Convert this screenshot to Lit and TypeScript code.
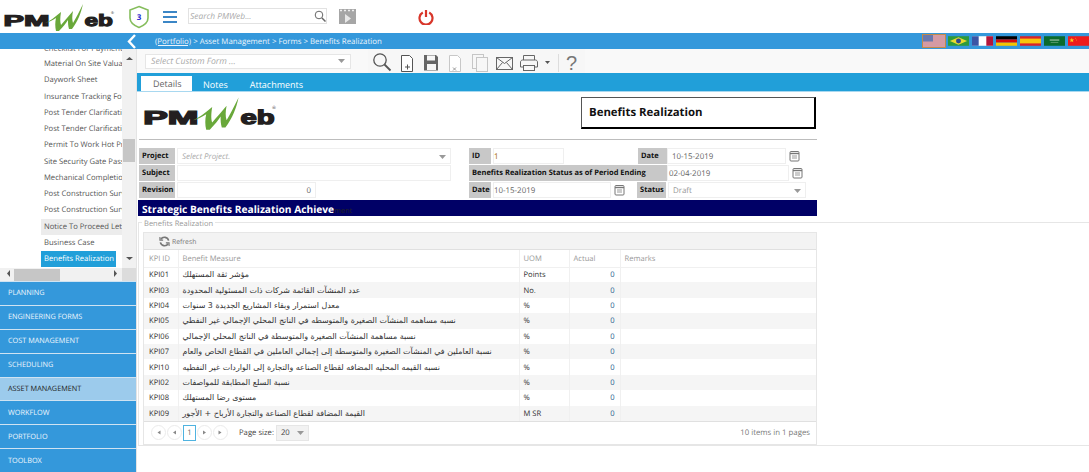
import { LitElement, html, css, svg } from 'lit';
import { customElement, property } from 'lit/decorators.js';
import { classMap } from 'lit/directives/class-map.js';

const TREE_ITEMS = [
  'Checklist For Payment',
  'Material On Site Valuation',
  'Daywork Sheet',
  'Insurance Tracking Form',
  'Post Tender Clarification',
  'Post Tender Clarification',
  'Permit To Work Hot Process',
  'Site Security Gate Pass',
  'Mechanical Completion',
  'Post Construction Survey',
  'Post Construction Survey',
  'Notice To Proceed Letter',
  'Business Case',
  'Benefits Realization',
];

const MODULES = [
  'PLANNING',
  'ENGINEERING FORMS',
  'COST MANAGEMENT',
  'SCHEDULING',
  'ASSET MANAGEMENT',
  'WORKFLOW',
  'PORTFOLIO',
  'TOOLBOX',
];

const KPIS = [
  ['KPI01', 'مؤشر ثقة المستهلك', 'Points'],
  ['KPI03', 'عدد المنشآت القائمة شركات ذات المسئولية المحدودة', 'No.'],
  ['KPI04', 'معدل استمرار وبقاء المشاريع الجديدة 3 سنوات', '%'],
  ['KPI05', 'نسبه مساهمه المنشآت الصغيرة والمتوسطه في الناتج المحلي الإجمالي غير النفطي', '%'],
  ['KPI06', 'نسبة مساهمة المنشآت الصغيرة والمتوسطة في الناتج المحلي الإجمالي', '%'],
  ['KPI07', 'نسبة العاملين في المنشآت الصغيرة والمتوسطة إلى إجمالي العاملين في القطاع الخاص والعام', '%'],
  ['KPI10', 'نسبه القيمه المحليه المضافه لقطاع الصناعه والتجارة إلى الواردات غير النفطيه', '%'],
  ['KPI02', 'نسبة السلع المطابقة للمواصفات', '%'],
  ['KPI08', 'مستوى رضا المستهلك', '%'],
  ['KPI09', 'القيمة المضافة لقطاع الصناعة والتجارة الأرباح + الأجور', 'M SR'],
];

const calendarIcon = html`<svg class="cal" viewBox="0 0 11 12" width="11" height="12">
  <rect x="1" y="1.5" width="9" height="9.5" rx="1" fill="none" stroke="#777" />
  <path d="M1 3.5h9" stroke="#777" stroke-width="1.4" />
  <path d="M3 6h5M3 8h5" stroke="#999" />
</svg>`;

const caret = html`<svg class="caret" viewBox="0 0 7 4" width="7" height="4"><path d="M0 0h7L3.5 4z" fill="#999" /></svg>`;

const flags = [
  svg`<rect width="22" height="12" fill="#e9dcdc"/>
    <path d="M0 1h22M0 3h22M0 5h22M0 7h22M0 9h22M0 11h22" stroke="#c0586a" stroke-width="1"/>
    <rect width="10" height="6.5" fill="#6a78ad"/>`,
  svg`<rect width="22" height="10" y="1" fill="#2d9a3c"/><path d="M11 2l9 4-9 4-9-4z" fill="#e8d930"/><circle cx="11" cy="6" r="2.6" fill="#2c4a8e"/>`,
  svg`<rect width="22" height="10" y="1" fill="#fff"/><rect width="7" height="10" y="1" fill="#3b55a5"/><rect x="15" width="7" height="10" y="1" fill="#b3163a"/>`,
  svg`<rect width="22" height="3.4" y="1" fill="#000"/><rect width="22" height="3.3" y="4.4" fill="#d80b0b"/><rect width="22" height="3.3" y="7.7" fill="#f5c400"/>`,
  svg`<rect width="22" height="10" y="1" fill="#d8232a"/><rect width="22" height="5" y="3.5" fill="#f6c60d"/>`,
  svg`<rect width="22" height="10" y="1" fill="#0a6b2d"/><path d="M6 5h10" stroke="#8fbb9c" stroke-width="1.4"/><path d="M7 7.5h8" stroke="#8fbb9c" stroke-width=".6"/>`,
  svg`<rect width="22" height="10" y="1" fill="#ee1c1c"/><path d="M4 2.5l.7 1.8 1.8.1-1.4 1.1.5 1.8L4 6.2 2.4 7.3l.5-1.8-1.4-1.1 1.8-.1z" fill="#f7d21a"/><circle cx="8" cy="3" r=".5" fill="#f7d21a"/><circle cx="9" cy="5" r=".5" fill="#f7d21a"/>`,
];

@customElement('pm-logo')
export class PmLogo extends LitElement {
  @property({ type: Number }) width = 115;

  static styles = css`
    :host {
      display: block;
    }
    svg {
      display: block;
    }
    text {
      font-family: 'Liberation Sans', Arial, sans-serif;
      font-weight: 700;
      fill: #231f20;
      stroke: #231f20;
      stroke-width: 1.1;
    }
    .reg {
      font-size: 4px;
      stroke-width: 0;
      font-weight: 400;
    }
  `;

  render() {
    return html`<svg viewBox="0 0 115 30" width=${this.width} height=${this.width * 30 / 115}>
      <text x="3.5" y="24" font-size="15.5" textLength="46" lengthAdjust="spacingAndGlyphs">PM</text>
      <text x="84.5" y="24" font-size="16.5" textLength="28.5" lengthAdjust="spacingAndGlyphs">eb</text>
      <path d="M45 21 C50 19 55 15 61 10 C60 16 60 20 61 23 C65 18 69 14 73 9 C72 14 72 18 73 21 C76 16 79 10 83 2 C81 11 78 19 72 27 L69 27 C68 24 68 21 68 18 C66 21 63 25 59 29 L56 29 C55 25 55 20 56 16 C53 18 49 20 45 21 Z" fill="#69a83a" />
      <text class="reg" x="111" y="12">®</text>
    </svg>`;
  }
}

@customElement('app-root')
export class AppRoot extends LitElement {
  static styles = css`
    :host {
      display: block;
      width: 1089px;
      height: 472px;
      overflow: hidden;
      background: #fff;
      font-family: 'Open Sans', 'DejaVu Sans', sans-serif;
      font-size: 7.7px;
      color: #333;
      text-rendering: geometricPrecision;
    }
    .top {
      height: 33px;
      display: flex;
      align-items: center;
    }
    .top pm-logo {
      margin-right: 13px;
    }
    .hamburger {
      margin-left: 13px;
    }
    .search {
      margin-left: 11px;
      width: 136px;
      height: 14px;
      border: 1px solid #e2e2e2;
      display: flex;
      align-items: center;
      justify-content: space-between;
      padding: 0 0 0 1px;
      font-size: 8.4px;
      font-style: italic;
      color: #aaa;
      margin-top: -1px;
    }
    .film {
      margin-left: 12px;
    }
    .power {
      margin-left: 62px;
    }
    .crumbs {
      height: 16px;
      background: #3498db;
      color: #eaf4fb;
      display: flex;
      align-items: center;
    }
    .chevron {
      margin-left: 127px;
    }
    .path {
      margin-left: 19px;
      padding-top: 1px;
      flex: 1;
      font-size: 7.85px;
    }
    .path u {
      text-decoration: underline;
    }
    .flags {
      display: flex;
      align-items: center;
      gap: 3px;
    }
    .flags svg {
      display: block;
    }
    .flags svg.sel {
      outline: 1px solid #c08a4a;
    }
    .body {
      display: flex;
      height: 423px;
    }
    .side {
      width: 136px;
      flex: none;
      display: flex;
      flex-direction: column;
      border-right: 1px solid #e4e4e4;
    }
    .tree-wrap {
      height: 219px;
      display: flex;
      overflow: hidden;
    }
    .tree {
      width: 122px;
      overflow: hidden;
    }
    .tree-item {
      height: 16.25px;
      line-height: 16.25px;
      padding-left: 3px;
      margin-left: 41px;
      white-space: nowrap;
      color: #555;
      font-size: 7.65px;
      overflow: hidden;
    }
    .tree-item:first-child {
      height: 7px;
      line-height: 0;
    }
    .tree-item.hover {
      background: #ececec;
    }
    .tree-item.sel {
      background: #219fd9;
      color: #fff;
      margin-right: 6px;
    }
    .vbar {
      width: 14px;
      background: #f1f1f1;
      display: flex;
      flex-direction: column;
      align-items: center;
      justify-content: space-between;
      padding: 6px 0;
      box-sizing: border-box;
      position: relative;
    }
    .vthumb {
      position: absolute;
      top: 90px;
      left: 1px;
      width: 12px;
      height: 23px;
      background: #c6c6c6;
    }
    .hbar {
      height: 13px;
      background: #f1f1f1;
      display: flex;
      align-items: center;
      flex: none;
    }
    .harrow-l {
      margin-left: 5px;
    }
    .hthumb {
      margin-left: 2px;
      width: 46px;
      height: 12px;
      background: #c6c6c6;
    }
    .harrow-r {
      margin-left: 52px;
    }
    .hcorner {
      margin-left: auto;
      width: 14px;
      height: 13px;
      background: #dcdcdc;
    }
    .module {
      flex: 1;
      display: flex;
      align-items: center;
      padding-left: 8px;
      background: #3498db;
      color: #eef6fc;
      font-size: 7.3px;
      border-top: 1px solid #cfe3f2;
    }
    .module.active {
      background: #9ccbec;
      color: #222;
    }
    .main {
      flex: 1;
      min-width: 0;
    }
    .toolbar {
      height: 24px;
      background: #f9f9f9;
      display: flex;
      align-items: center;
      padding-left: 8px;
    }
    .custom {
      width: 194px;
      height: 13px;
      background: #fff;
      border: 1px solid #e6e6e6;
      display: flex;
      align-items: center;
      justify-content: space-between;
      padding: 0 5px;
      color: #aaa;
      font-size: 8.7px;
      font-style: italic;
    }
    .tools {
      margin-left: 17px;
      height: 24px;
      width: 217px;
      background: #f7f7f7;
    }
    .tools svg {
      display: block;
    }
    .tab-bar {
      height: 19px;
      box-sizing: border-box;
      background: #219fd9;
      display: flex;
      align-items: flex-end;
      padding-left: 4px;
      border-bottom: 1px solid #a8d8f0;
      color: #fff;
      font-size: 9px;
    }
    .tab {
      height: 14px;
      line-height: 16px;
      padding: 0 11px;
    }
    .tab.on {
      background: #fff;
      color: #666;
      height: 15px;
      width: 39px;
      padding: 0 0 0 12px;
    }
    .head {
      display: flex;
      box-sizing: border-box;
      padding-top: 3px;
      height: 48px;
      width: 678px;
      justify-content: space-between;
      border-bottom: 1px solid #bdbdbd;
      margin-left: 2px;
    }
    .title {
      box-sizing: border-box;
      width: 235px;
      height: 32px;
      margin: 2px 1px 0 0;
      border-top: 1px solid #555;
      border-left: 1px solid #555;
      border-right: 2px solid #000;
      border-bottom: 2px solid #000;
      display: flex;
      align-items: center;
      padding-left: 7px;
      font-size: 11.4px;
      font-weight: 700;
      color: #111;
    }
    .form {
      display: flex;
      box-sizing: border-box;
      padding: 8px 0 0 2px;
      gap: 18px;
      height: 58px;
    }
    .col {
      display: flex;
      flex-direction: column;
      gap: 1px;
    }
    .left-col {
      width: 312px;
    }
    .row {
      display: flex;
      height: 16px;
      align-items: stretch;
    }
    .lbl {
      background: #c8c8c8;
      color: #111;
      font-weight: 700;
      font-size: 7.5px;
      line-height: 17px;
      padding-left: 3px;
      flex: none;
      box-sizing: border-box;
      white-space: nowrap;
    }
    .l36 { width: 36px; margin-right: 2px; }
    .l22 { width: 22px; margin-right: 2px; }
    .l29 { width: 29px; }
    .l198 { width: 198px; }
    .inp {
      border: 1px solid #efefef;
      background: #fff;
      padding: 1px 4px 0;
      box-sizing: border-box;
      font-size: 7.9px;
      color: #666;
      display: flex;
      align-items: center;
      justify-content: space-between;
      white-space: nowrap;
    }
    .w274 { width: 274px; }
    .w139 { width: 139px; justify-content: flex-end; }
    .w71 { width: 71px; color: #a86a00; padding-left: 0; }
    .w119 { width: 119px; }
    .w122 { width: 122px; padding-left: 1px; }
    .w118 { width: 118px; padding-left: 0; }
    .w138 { width: 138px; margin-left: 2px; }
    .ph {
      font-style: italic;
      color: #aaa;
    }
    .muted {
      color: #999;
    }
    .gap-74 { margin-left: 74px; }
    .gap-12 { margin-left: 12px; }
    .cal {
      align-self: center;
      margin-left: 3px;
      flex: none;
    }
    .band {
      margin: 2px 0 0 1px;
      width: 679px;
      height: 16px;
      background: #000066;
      color: #fff;
      font-weight: 700;
      font-size: 10.2px;
      line-height: 18px;
      padding-left: 4px;
      box-sizing: border-box;
      white-space: nowrap;
    }
    .band small {
      color: #222;
      font-size: 7.3px;
      font-weight: 400;
    }
    .fieldset {
      margin: 6px 0 0 1px;
      border-top: 1px solid #e6e6e6;
      border-left: 1px solid #e6e6e6;
      border-bottom: 1px solid #e6e6e6;
      height: 224px;
      padding: 0 0 0 4px;
      box-sizing: border-box;
      position: relative;
    }
    .legend {
      position: absolute;
      top: -3px;
      left: 3px;
      background: #fff;
      padding: 0 2px;
      font-size: 7.55px;
      line-height: 8px;
      color: #999;
    }
    .grid {
      margin-top: 9px;
      width: 674px;
      border: 1px solid #e6e6e6;
      box-sizing: border-box;
    }
    .refresh {
      height: 16px;
      padding-top: 1px;
      box-sizing: content-box;
      height: 15px;
      background: #f3f3f3;
      border-bottom: 1px solid #e0e0e0;
      display: flex;
      align-items: center;
      gap: 2px;
      padding-left: 15px;
      color: #777;
      font-size: 6.8px;
    }
    table {
      width: 100%;
      border-collapse: collapse;
      table-layout: fixed;
    }
    th {
      height: 17px;
      box-sizing: border-box;
      font-weight: 400;
      text-align: left;
      color: #999;
      padding: 1px 0 0 4px;
      font-size: 7.6px;
      border-bottom: 1px solid #f0f0f0;
      border-left: 1px solid #f0f0f0;
    }
    td {
      height: 15.4px;
      padding: 1px 0 0 4px;
      font-size: 7.6px;
      line-height: 12px;
      color: #333;
      border-left: 1px solid #f0f0f0;
      white-space: nowrap;
      overflow: hidden;
      box-sizing: border-box;
    }
    th:first-child,
    td:first-child {
      border-left: 0;
      padding-left: 5px;
    }
    tr.alt td {
      background: #f5f5f5;
    }
    .ar {
      font-family: 'DejaVu Sans', sans-serif;
      font-size: 7.95px;
      color: #333;
    }
    td.num {
      text-align: right;
      padding-right: 5px;
      color: #1b5c8a;
    }
    .col-id { width: 34px; }
    .col-name { width: 341px; }
    .col-uom { width: 50px; }
    .col-actual { width: 51px; }
    .pager {
      height: 22px;
      border-top: 1px solid #e0e0e0;
      display: flex;
      align-items: center;
      padding-left: 7px;
      color: #444;
      font-size: 7.7px;
    }
    .pg {
      width: 15px;
      height: 15px;
      border: 1px solid #ebebeb;
      border-radius: 50%;
      display: flex;
      align-items: center;
      justify-content: center;
      margin-right: 1px;
      box-sizing: border-box;
      flex: none;
    }
    .pg svg path {
      fill: #888;
    }
    .pg.cur {
      border-radius: 0;
      border-color: #4fb3e0;
      color: #666;
      width: 13px;
      height: 16px;
    }
    .size-lbl {
      margin-left: 10px;
    }
    .size {
      margin-left: 2px;
      width: 33px;
      height: 16px;
      background: #f2f2f2;
      border: 1px solid #e6e6e6;
      box-sizing: border-box;
      display: flex;
      align-items: center;
      justify-content: space-between;
      padding: 0 4px;
    }
    .count {
      margin-left: auto;
      padding-right: 6px;
      color: #777;
      font-size: 7.8px;
    }
  `;

  private arrow(d: string) {
    return html`<svg viewBox="0 0 7 7" width="7" height="7"><path d=${d} fill="#555" /></svg>`;
  }

  private toolIcons() {
    return html`<svg viewBox="0 -1 217 24" width="217" height="24" fill="none">
      <g stroke="#555" stroke-width="1.3">
        <circle cx="12" cy="10" r="6.2" />
        <path d="M16.5 14.500l6 6" stroke-width="1.800" />
      </g>
      <path d="M33.500 5.500h8l3 3v13h-11z" fill="#fff" stroke="#555" />
      <path d="M37 17h5M39.500 14.500v5" stroke="#555" />
      <path d="M56 5h12l2 2v13.500H56z" fill="#666" />
      <rect x="59" y="5.500" width="8" height="5" fill="#f7f7f7" />
      <rect x="59" y="14" width="9" height="6" fill="#f7f7f7" />
      <path d="M81.500 5.500h8l3 3v13h-11z" fill="#fff" stroke="#c8c8c8" />
      <path d="M85 17.500l3 3m0-3l-3 3" stroke="#999" />
      <rect x="104.500" y="4.500" width="11" height="14" stroke="#c6c6c6" />
      <rect x="108.500" y="7.500" width="11" height="14" fill="#f7f7f7" stroke="#c6c6c6" />
      <rect x="128.500" y="7.500" width="16" height="12" stroke="#666" />
      <path d="M128.500 7.500l8 6 8-6M128.500 19.500l6-7M144.500 19.500l-6-7" stroke="#666" />
      <path d="M152.500 17v-5c0-1 1-2 2-2h13c1 0 2 1 2 2v5z" stroke="#666" />
      <path d="M155.500 10V5.500h11V10" stroke="#666" />
      <rect x="155.500" y="15.500" width="11" height="5" fill="#f7f7f7" stroke="#666" />
      <path d="M177 11h5l-2.500 3z" fill="#555" />
      <path d="M190.500 4v18" stroke="#ddd" />
      <text x="198" y="20" font-size="20" font-family="Liberation Sans" fill="#777">?</text>
    </svg>`;
  }

  render() {
    return html`
      <div class="top">
        <pm-logo .width=${115}></pm-logo>
        <svg viewBox="0 0 22 24" width="22" height="24" aria-label="3 alerts">
          <path d="M11 1.500l9 3.500v8c0 4.500-4 7.500-9 9.500-5-2-9-5-9-9.500V5z" fill="#fff" stroke="#85bd5c" stroke-width="1.600" />
          <text x="11" y="15" text-anchor="middle" font-size="8" font-weight="700" font-family="Open Sans" fill="#2222cc">3</text>
        </svg>
        <svg class="hamburger" viewBox="0 0 14 12" width="14" height="12">
          <path d="M0 1h14M0 6h14M0 11h14" stroke="#3b86c6" stroke-width="2" />
        </svg>
        <div class="search">
          <span>Search PMWeb...</span>
          <svg viewBox="0 0 12 12" width="12" height="12" fill="none" stroke="#666">
            <circle cx="5" cy="5" r="3.800" />
            <path d="M8 8l3.500 3.500" stroke-width="1.500" />
          </svg>
        </div>
        <svg class="film" viewBox="0 0 17 15" width="17" height="15">
          <rect width="17" height="15" fill="#a6a6a6" />
          <path d="M1 1.500h2M5 1.500h2M9 1.500h2M13 1.500h2" stroke="#eee" stroke-width="1.500" />
          <path d="M6 5l6 4.500-6 4.500z" fill="#e8e8e8" />
        </svg>
        <svg class="power" viewBox="0 0 16 16" width="16" height="16" fill="none" stroke="#d8362a" stroke-width="2.200">
          <path d="M4.800 3.500a6.500 6.500 0 1 0 6.400 0" />
          <path d="M8 1v7" />
        </svg>
      </div>
      <div class="crumbs">
        <svg class="chevron" viewBox="0 0 9 15" width="9" height="15" fill="none" stroke="#fff" stroke-width="2.400">
          <path d="M8 1L2 7.500l6 6.500" />
        </svg>
        <div class="path"><u>(Portfolio)</u> &gt; Asset Management &gt; Forms &gt; Benefits Realization</div>
        <div class="flags">
          ${flags.map(
            (f, i) => html`<svg class=${classMap({ sel: i === 0 })} viewBox="0 0 22 12" width=${i === 0 ? 22 : 21} height="12">${f}</svg>`,
          )}
        </div>
      </div>
      <div class="body">
        <div class="side">
          <div class="tree-wrap">
            <div class="tree">
              ${TREE_ITEMS.map(
                (t, i) => html`<div class=${classMap({ 'tree-item': true, hover: i === 11, sel: i === 13 })}>${t}</div>`,
              )}
            </div>
            <div class="vbar">
              ${this.arrow('M0 5h7L3.500 2z')}
              <div class="vthumb"></div>
              ${this.arrow('M0 2h7L3.500 5z')}
            </div>
          </div>
          <div class="hbar">
            <span class="harrow-l">${this.arrow('M5 0v7L2 3.500z')}</span>
            <div class="hthumb"></div>
            <span class="harrow-r">${this.arrow('M2 0v7l3-3.500z')}</span>
            <div class="hcorner"></div>
          </div>
          ${MODULES.map((m, i) => html`<div class=${classMap({ module: true, active: i === 4 })}>${m}</div>`)}
        </div>
        <div class="main">
          <div class="toolbar">
            <div class="custom"><span>Select Custom Form ...</span>${caret}</div>
            <div class="tools">${this.toolIcons()}</div>
          </div>
          <div class="tab-bar">
            <div class="tab on">Details</div>
            <div class="tab">Notes</div>
            <div class="tab">Attachments</div>
          </div>
          <div class="head">
            <pm-logo .width=${138}></pm-logo>
            <div class="title">Benefits Realization</div>
          </div>
          <div class="form">
            <div class="col left-col">
              <div class="row">
                <div class="lbl l36">Project</div>
                <div class="inp w274"><span class="ph">Select Project.</span>${caret}</div>
              </div>
              <div class="row">
                <div class="lbl l36">Subject</div>
                <div class="inp w274"></div>
              </div>
              <div class="row">
                <div class="lbl l36">Revision</div>
                <div class="inp w139">0</div>
              </div>
            </div>
            <div class="col">
              <div class="row">
                <div class="lbl l22">ID</div>
                <div class="inp w71">1</div>
                <div class="lbl l29 gap-74">Date</div>
                <div class="inp w119">10-15-2019</div>
                ${calendarIcon}
              </div>
              <div class="row">
                <div class="lbl l198">Benefits Realization Status as of Period Ending</div>
                <div class="inp w122">02-04-2019</div>
                ${calendarIcon}
              </div>
              <div class="row">
                <div class="lbl l22">Date</div>
                <div class="inp w118">10-15-2019</div>
                ${calendarIcon}
                <div class="lbl l29 gap-12">Status</div>
                <div class="inp w138"><span class="muted">Draft</span>${caret}</div>
              </div>
            </div>
          </div>
          <div class="band">Strategic Benefits Realization Achieve<small>ment</small></div>
          <div class="fieldset">
            <div class="legend">Benefits Realization</div>
            <div class="grid">
              <div class="refresh">
                <svg viewBox="0 0 12 12" width="11" height="11" fill="none" stroke="#777" stroke-width="1.800">
                  <path d="M10.500 5A4.700 4.700 0 0 0 2 3.500M1.500 7A4.700 4.700 0 0 0 10 8.500" />
                  <path d="M1 1v3.500h3.500M11 11V7.500H7.500" stroke-width="1.200" />
                </svg>
                Refresh
              </div>
              <table>
                <colgroup>
                  <col class="col-id" /><col class="col-name" /><col class="col-uom" /><col class="col-actual" /><col />
                </colgroup>
                <thead>
                  <tr><th>KPI ID</th><th>Benefit Measure</th><th>UOM</th><th>Actual</th><th>Remarks</th></tr>
                </thead>
                <tbody>
                  ${KPIS.map(
                    ([id, name, uom], i) => html`<tr class=${classMap({ alt: i % 2 === 1 })}>
                      <td>${id}</td>
                      <td><span class="ar">${name}</span></td>
                      <td>${uom}</td>
                      <td class="num">0</td>
                      <td></td>
                    </tr>`,
                  )}
                </tbody>
              </table>
              <div class="pager">
                <div class="pg">${this.arrow('M1 1.500v4M5.500 1.500v4L2.500 3.500z')}</div>
                <div class="pg">${this.arrow('M5 1.500v4L2 3.500z')}</div>
                <div class="pg cur">1</div>
                <div class="pg">${this.arrow('M2 1.500v4l3-2z')}</div>
                <div class="pg">${this.arrow('M1.500 1.500v4l3-2zM6 1.500v4')}</div>
                <span class="size-lbl">Page size:</span>
                <div class="size"><span>20</span>${caret}</div>
                <div class="count">10 items in 1 pages</div>
              </div>
            </div>
          </div>
        </div>
      </div>
    `;
  }
}
